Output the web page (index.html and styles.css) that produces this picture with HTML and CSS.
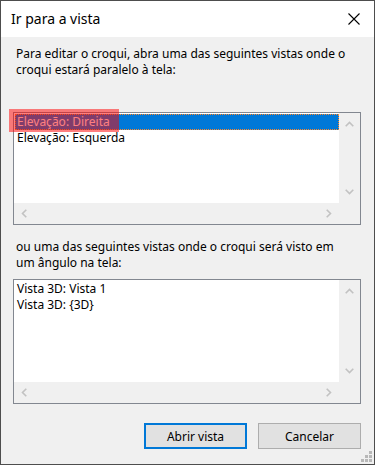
FILE: index.html
```html
<!DOCTYPE html>
<html>
<head>
<meta charset="utf-8">
<link rel="stylesheet" href="styles.css">
</head>
<body>
<div class="window">
  <div class="titlebar">
    <span class="title">Ir para a vista</span>
    <svg class="close" width="12" height="12" viewBox="0 0 12 12"><path d="M0.5 0.5 L11.5 11.5 M11.5 0.5 L0.5 11.5" stroke="#000" stroke-width="1.1" fill="none"/></svg>
  </div>
  <div class="content">
    <p class="label label-top">Para editar o croqui, abra uma das seguintes vistas onde o<br>croqui estará paralelo à tela:</p>
    <div class="listbox listbox-a">
      <div class="items">
        <div class="item selected">Elevação: Direita</div>
        <div class="item">Elevação: Esquerda</div>
      </div>
      <div class="vscroll">
        <svg class="chev" width="9" height="6" viewBox="0 0 9 6"><path d="M0.7 5.3 L4.5 1.5 L8.3 5.3" /></svg>
        <svg class="chev" width="9" height="6" viewBox="0 0 9 6"><path d="M0.7 0.7 L4.5 4.5 L8.3 0.7" /></svg>
      </div>
      <div class="hscroll">
        <svg class="chev" width="6" height="9" viewBox="0 0 6 9"><path d="M5.3 0.7 L1.5 4.5 L5.3 8.3" /></svg>
        <svg class="chev" width="6" height="9" viewBox="0 0 6 9"><path d="M0.7 0.7 L4.5 4.5 L0.7 8.3" /></svg>
      </div>
      <div class="corner"></div>
    </div>
    <p class="label label-mid">ou uma das seguintes vistas onde o croqui será visto em<br>um ângulo na tela:</p>
    <div class="listbox listbox-b">
      <div class="items">
        <div class="item">Vista 3D: Vista 1</div>
        <div class="item">Vista 3D: {3D}</div>
      </div>
      <div class="vscroll">
        <svg class="chev" width="9" height="6" viewBox="0 0 9 6"><path d="M0.7 5.3 L4.5 1.5 L8.3 5.3" /></svg>
        <svg class="chev" width="9" height="6" viewBox="0 0 9 6"><path d="M0.7 0.7 L4.5 4.5 L8.3 0.7" /></svg>
      </div>
      <div class="hscroll">
        <svg class="chev" width="6" height="9" viewBox="0 0 6 9"><path d="M5.3 0.7 L1.5 4.5 L5.3 8.3" /></svg>
        <svg class="chev" width="6" height="9" viewBox="0 0 6 9"><path d="M0.7 0.7 L4.5 4.5 L0.7 8.3" /></svg>
      </div>
      <div class="corner"></div>
    </div>
    <div class="buttons">
      <button class="btn btn-default">Abrir vista</button>
      <button class="btn">Cancelar</button>
    </div>
  </div>
  <div class="highlight"></div>
  <div class="grip">
    <span></span><span></span><span></span>
    <span></span><span></span><span></span>
    <span></span><span></span><span></span>
  </div>
</div>
</body>
</html>
```
FILE: styles.css
```css
html, body {
  margin: 0;
  padding: 0;
}
body {
  font-family: "Noto Sans", "DejaVu Sans", sans-serif;
  font-size: 12px;
  line-height: 16px;
  color: #000;
  background: #f0f0f0;
}
.window {
  position: relative;
  width: 375px;
  height: 465px;
  box-sizing: border-box;
  border: 1px solid #4d4d4d;
  background: #f0f0f0;
  display: flex;
  flex-direction: column;
}
.titlebar {
  height: 36px;
  background: #fff;
  display: flex;
  align-items: center;
  justify-content: space-between;
  padding: 0 14px 0 10px;
  flex: none;
}
.title {
  font-size: 14px;
  line-height: 20px;
  color: #000;
}
.close {
  display: block;
}
.content {
  padding: 9px 13px 0 12px;
  display: flex;
  flex-direction: column;
}
.label {
  margin: 0 0 0 3px;
  white-space: nowrap;
}
.label-mid {
  margin-top: 14px;
}
.listbox {
  border: 1px solid #828790;
  background: #fff;
  display: grid;
  grid-template-columns: 1fr 21px;
  grid-template-rows: 1fr 21px;
}
.listbox-a {
  margin-top: 34px;
  height: 113px;
  box-sizing: border-box;
}
.listbox-b {
  margin-top: 8px;
  height: 125px;
  box-sizing: border-box;
}
.items {
  padding: 1px 0 0 1px;
}
.item {
  height: 16px;
  padding-left: 2px;
  white-space: nowrap;
  box-sizing: border-box;
}
.item.selected {
  background: #0078d7;
  color: #fff;
  outline: 1px dotted #ff8728;
  outline-offset: -1px;
}
.vscroll {
  background: #f0f0f0;
  display: flex;
  flex-direction: column;
  justify-content: space-between;
  align-items: center;
  padding: 8px 0 8px;
}
.hscroll {
  background: #f0f0f0;
  display: flex;
  justify-content: space-between;
  align-items: center;
  padding: 0 7px 0 7px;
}
.corner {
  background: #f0f0f0;
}
.chev {
  display: block;
}
.chev path {
  fill: none;
  stroke: #c2c2c2;
  stroke-width: 1.6;
}
.buttons {
  margin-top: 19px;
  display: flex;
  justify-content: flex-end;
  gap: 11px;
}
.btn {
  width: 103px;
  height: 26px;
  box-sizing: border-box;
  background: #e1e1e1;
  border: 1px solid #adadad;
  font-family: "Noto Sans", "DejaVu Sans", sans-serif;
  font-size: 12px;
  color: #000;
  padding: 0;
  margin: 0;
}
.btn-default {
  border: 2px solid #0078d7;
}
.highlight {
  position: absolute;
  left: 8px;
  top: 108px;
  width: 110px;
  height: 23px;
  background: rgba(255, 0, 0, 0.5);
}
.grip {
  position: absolute;
  right: 2px;
  bottom: 2px;
  display: grid;
  grid-template-columns: repeat(3, 3px);
  grid-template-rows: repeat(3, 3px);
  gap: 1px;
}
.grip span {
  background: #b8b8b8;
}
.grip span:nth-child(1),
.grip span:nth-child(2),
.grip span:nth-child(4) {
  background: transparent;
}
```
